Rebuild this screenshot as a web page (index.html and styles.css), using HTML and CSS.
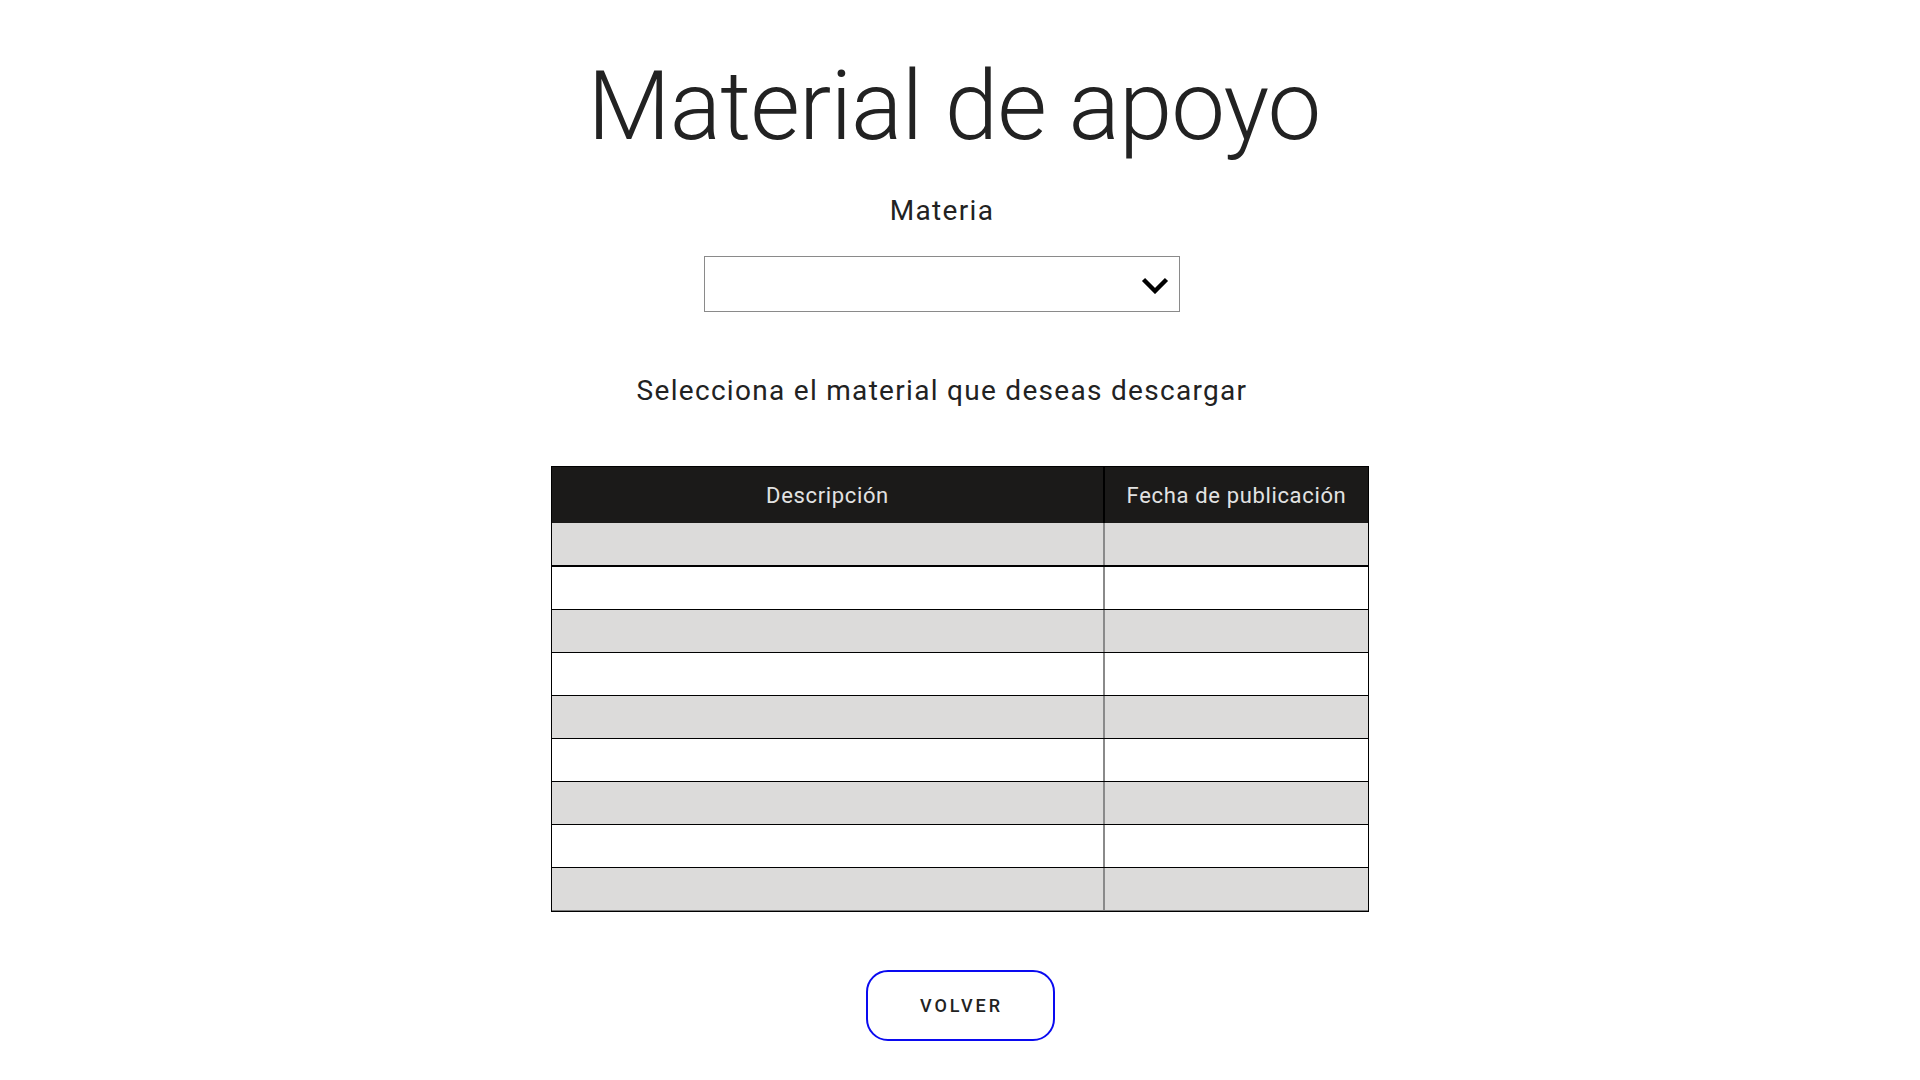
FILE: index.html
```html
<!DOCTYPE html>
<html lang="es">
<head>
<meta charset="utf-8">
<title>Material de apoyo</title>
<link rel="stylesheet" href="styles.css">
</head>
<body>
<main class="page">
  <h1 class="title">Material de apoyo</h1>
  <section class="picker">
    <label class="picker-label" for="materia">Materia</label>
    <div class="select" id="materia">
      <svg class="chevron" width="28" height="17" viewBox="0 0 28 17" aria-hidden="true">
        <path d="M2.5 2.5 L14 14 L25.5 2.5" fill="none" stroke="#000" stroke-width="4.4" stroke-linecap="butt" stroke-linejoin="miter"/>
      </svg>
    </div>
    <p class="hint">Selecciona el material que deseas descargar</p>
  </section>
  <div class="table">
    <div class="row head">
      <div class="cell c1">Descripción</div>
      <div class="cell c2">Fecha de publicación</div>
    </div>
    <div class="row body gray first"><div class="cell c1"></div><div class="cell c2"></div></div>
    <div class="row body"><div class="cell c1"></div><div class="cell c2"></div></div>
    <div class="row body gray"><div class="cell c1"></div><div class="cell c2"></div></div>
    <div class="row body"><div class="cell c1"></div><div class="cell c2"></div></div>
    <div class="row body gray"><div class="cell c1"></div><div class="cell c2"></div></div>
    <div class="row body"><div class="cell c1"></div><div class="cell c2"></div></div>
    <div class="row body gray"><div class="cell c1"></div><div class="cell c2"></div></div>
    <div class="row body"><div class="cell c1"></div><div class="cell c2"></div></div>
    <div class="row body gray last"><div class="cell c1"></div><div class="cell c2"></div></div>
  </div>
  <button class="back" type="button">VOLVER</button>
</main>
</body>
</html>
```
FILE: styles.css
```css
html, body {
  margin: 0;
  padding: 0;
  background: #ffffff;
}
body {
  font-family: Roboto, "Liberation Sans", sans-serif;
  color: #222222;
}
.page {
  display: flex;
  flex-direction: column;
  align-items: center;
}
.title {
  margin: 58px 0 0;
  padding-right: 12px;
  font-size: 96px;
  font-weight: 300;
  line-height: 1;
  color: #222222;
  letter-spacing: -0.9px;
}
.picker {
  align-self: stretch;
  display: flex;
  flex-direction: column;
  align-items: center;
  padding-right: 36px;
}
.picker-label {
  margin-top: 40px;
  font-size: 28px;
  line-height: 34px;
  letter-spacing: 1.35px;
  color: #222222;
}
.select {
  margin-top: 28px;
  box-sizing: border-box;
  width: 476px;
  height: 56px;
  border: 1px solid #8a8a8a;
  display: flex;
  align-items: center;
  justify-content: flex-end;
  padding-right: 10px;
}
.chevron {
  display: block;
  margin-top: 2px;
}
.hint {
  margin: 62px 0 0;
  font-size: 28px;
  line-height: 34px;
  letter-spacing: 1.3px;
  color: #222222;
}
.table {
  margin-top: 58px;
  box-sizing: border-box;
  width: 818px;
  border: 1px solid #000000;
}
.row {
  display: flex;
}
.cell.c1 {
  width: 551px;
  border-right: 2px solid #8a8a8a;
}
.cell.c2 {
  flex: 1;
}
.head {
  height: 56px;
  background: #1b1a19;
  color: #e2e2e2;
  font-size: 22px;
  letter-spacing: 0.65px;
}
.head .cell {
  display: flex;
  align-items: center;
  justify-content: center;
}
.head .c1 {
  border-right-color: #000000;
}
.body {
  height: 42px;
  border-bottom: 1px solid #000000;
  background: #ffffff;
}
.body.gray {
  background: #dcdbda;
}
.body.first {
  border-bottom-width: 2px;
}
.body.last {
  border-bottom: 1px solid #7a7a7a;
}
.back {
  margin-top: 58px;
  box-sizing: border-box;
  width: 189px;
  height: 71px;
  border: 2px solid #0a0af0;
  border-radius: 22px;
  background: #ffffff;
  font-family: Roboto, "Liberation Sans", sans-serif;
  font-size: 18px;
  font-weight: 500;
  letter-spacing: 3px;
  color: #222222;
  padding: 0 0 0 3px;
  cursor: pointer;
}
```
